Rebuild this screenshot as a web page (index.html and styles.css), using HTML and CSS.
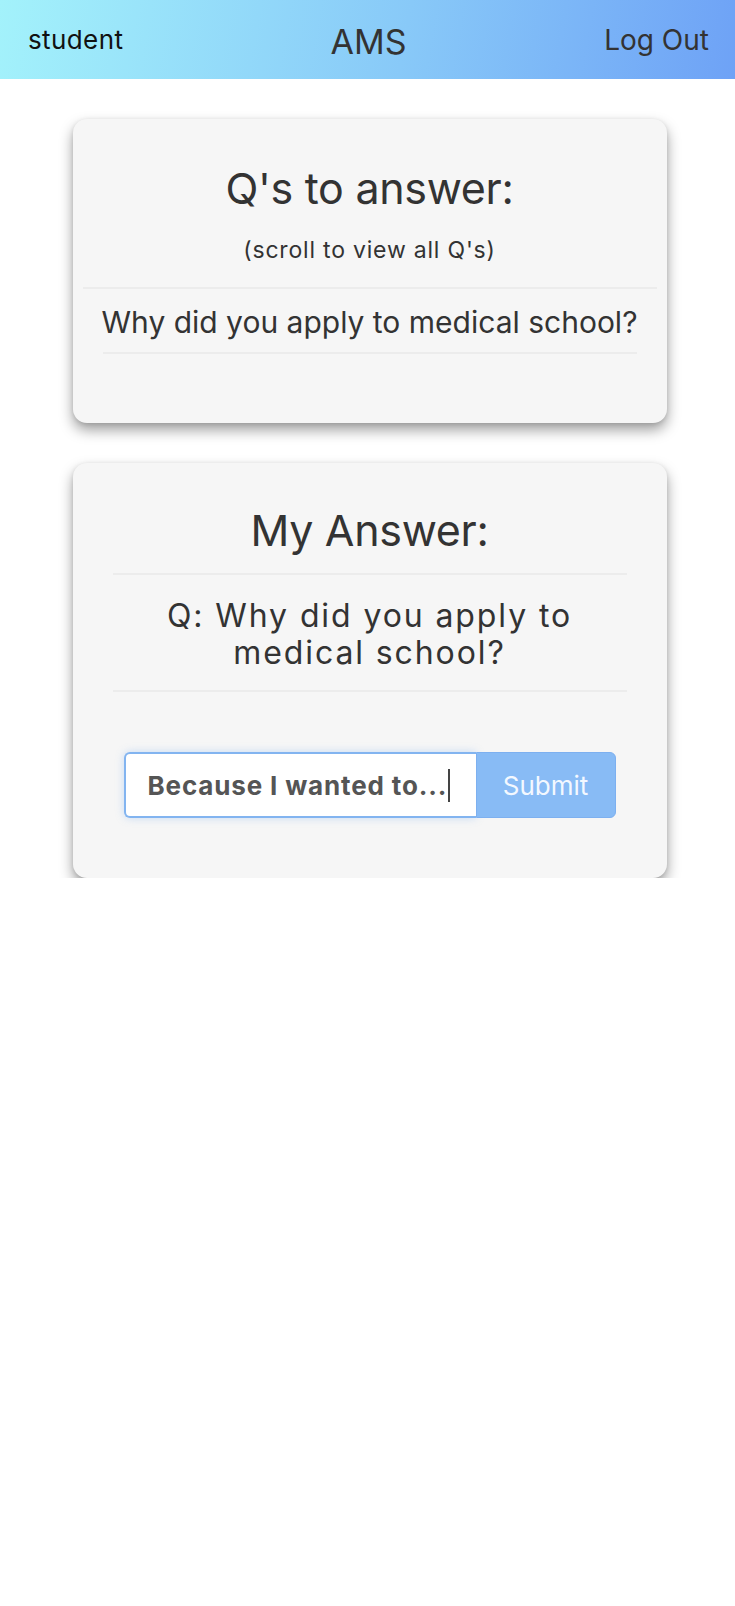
FILE: index.html
```html
<!DOCTYPE html>
<html lang="en">
<head>
<meta charset="utf-8">
<title>AMS</title>
<link rel="stylesheet" href="styles.css">
</head>
<body>
<header class="topbar">
  <span class="topbar-user">student</span>
  <span class="topbar-title">AMS</span>
  <span class="topbar-logout">Log Out</span>
</header>
<main class="page">
  <section class="card card-questions">
    <h1 class="card-title">Q's to answer:</h1>
    <p class="card-hint">(scroll to view all Q's)</p>
    <ul class="question-list">
      <li class="question-item">Why did you apply to medical school?</li>
    </ul>
  </section>
  <section class="card card-answer">
    <h1 class="card-title">My Answer:</h1>
    <p class="answer-question">Q: Why did you apply to medical school?</p>
    <form class="answer-form">
      <div class="answer-input"><span class="answer-text">Because I wanted to...</span><span class="caret"></span></div>
      <button type="button" class="answer-submit">Submit</button>
    </form>
  </section>
</main>
</body>
</html>
```
FILE: styles.css
```css
html, body {
  margin: 0;
  padding: 0;
  background: #ffffff;
  font-family: Inter, "Noto Sans", "Liberation Sans", sans-serif;
  color: #333333;
}

.topbar {
  height: 79px;
  box-sizing: border-box;
  padding: 4px 26px 0 28px;
  display: grid;
  grid-template-columns: 1fr auto 1fr;
  align-items: center;
  background: linear-gradient(100deg, #a3f2fb 0%, #88c9f8 55%, #6ea2f6 100%);
}

.topbar-user {
  font-size: 26px;
  letter-spacing: 0.4px;
  color: #111111;
  justify-self: start;
  margin-top: -4px;
}

.topbar-title {
  font-size: 34px;
  color: #333333;
  justify-self: center;
}

.topbar-logout {
  font-size: 28px;
  color: #333333;
  justify-self: end;
  margin-top: -3px;
}

.page {
  display: flex;
  flex-direction: column;
  align-items: center;
  gap: 40px;
  padding: 40px 0 0 4px;
}

.card {
  width: 594px;
  box-sizing: border-box;
  background: #f6f6f6;
  border-radius: 14px;
  box-shadow: 0 7px 14px rgba(0, 0, 0, 0.38), 0 1px 4px rgba(0, 0, 0, 0.1);
  text-align: center;
}

.card-questions {
  height: 304px;
  padding: 43px 10px 0;
}

.card-answer {
  height: 415px;
  padding: 41px 40px 0;
}

.card-title {
  margin: 0;
  font-size: 43px;
  line-height: 52px;
  font-weight: 400;
  color: #333333;
  letter-spacing: -0.3px;
}

.card-hint {
  margin: 22px 0 0;
  font-size: 23px;
  line-height: 28px;
  letter-spacing: 0.8px;
  color: #333333;
  padding-bottom: 23px;
  border-bottom: 2px solid #ececec;
}

.question-list {
  list-style: none;
  margin: 0 20px;
  padding: 0;
}

.question-item {
  font-size: 30px;
  line-height: 36px;
  color: #333333;
  white-space: nowrap;
  padding: 15px 0 12px;
  border-bottom: 2px solid #ececec;
  display: flex;
  justify-content: center;
}

.answer-question {
  margin: 17px 0 0;
  padding: 22px 0 19px;
  border-top: 2px solid #ececec;
  border-bottom: 2px solid #ececec;
  font-size: 32px;
  line-height: 37px;
  letter-spacing: 1.9px;
  color: #333333;
}

.answer-form {
  margin: 60px auto 0;
  width: 492px;
  height: 66px;
  display: flex;
}

.answer-input {
  flex: 0 0 352px;
  box-sizing: border-box;
  background: #ffffff;
  border: 2px solid #82b4f0;
  border-right: none;
  border-radius: 6px 0 0 6px;
  box-shadow: 0 0 8px rgba(110, 165, 240, 0.35);
  padding-left: 22px;
  display: flex;
  align-items: center;
}

.answer-text {
  font-size: 26px;
  font-weight: 700;
  letter-spacing: 0.85px;
  color: #555555;
  white-space: nowrap;
}

.caret {
  display: inline-block;
  width: 2px;
  height: 33px;
  background: #444444;
  margin-left: 1px;
}

.answer-submit {
  flex: 1 1 auto;
  margin: 0;
  background: #88bbf5;
  border: 1px solid #7db0f0;
  border-radius: 0 6px 6px 0;
  color: #f3f8ff;
  font-family: Inter, "Noto Sans", "Liberation Sans", sans-serif;
  font-size: 26px;
  padding: 0;
}
```
